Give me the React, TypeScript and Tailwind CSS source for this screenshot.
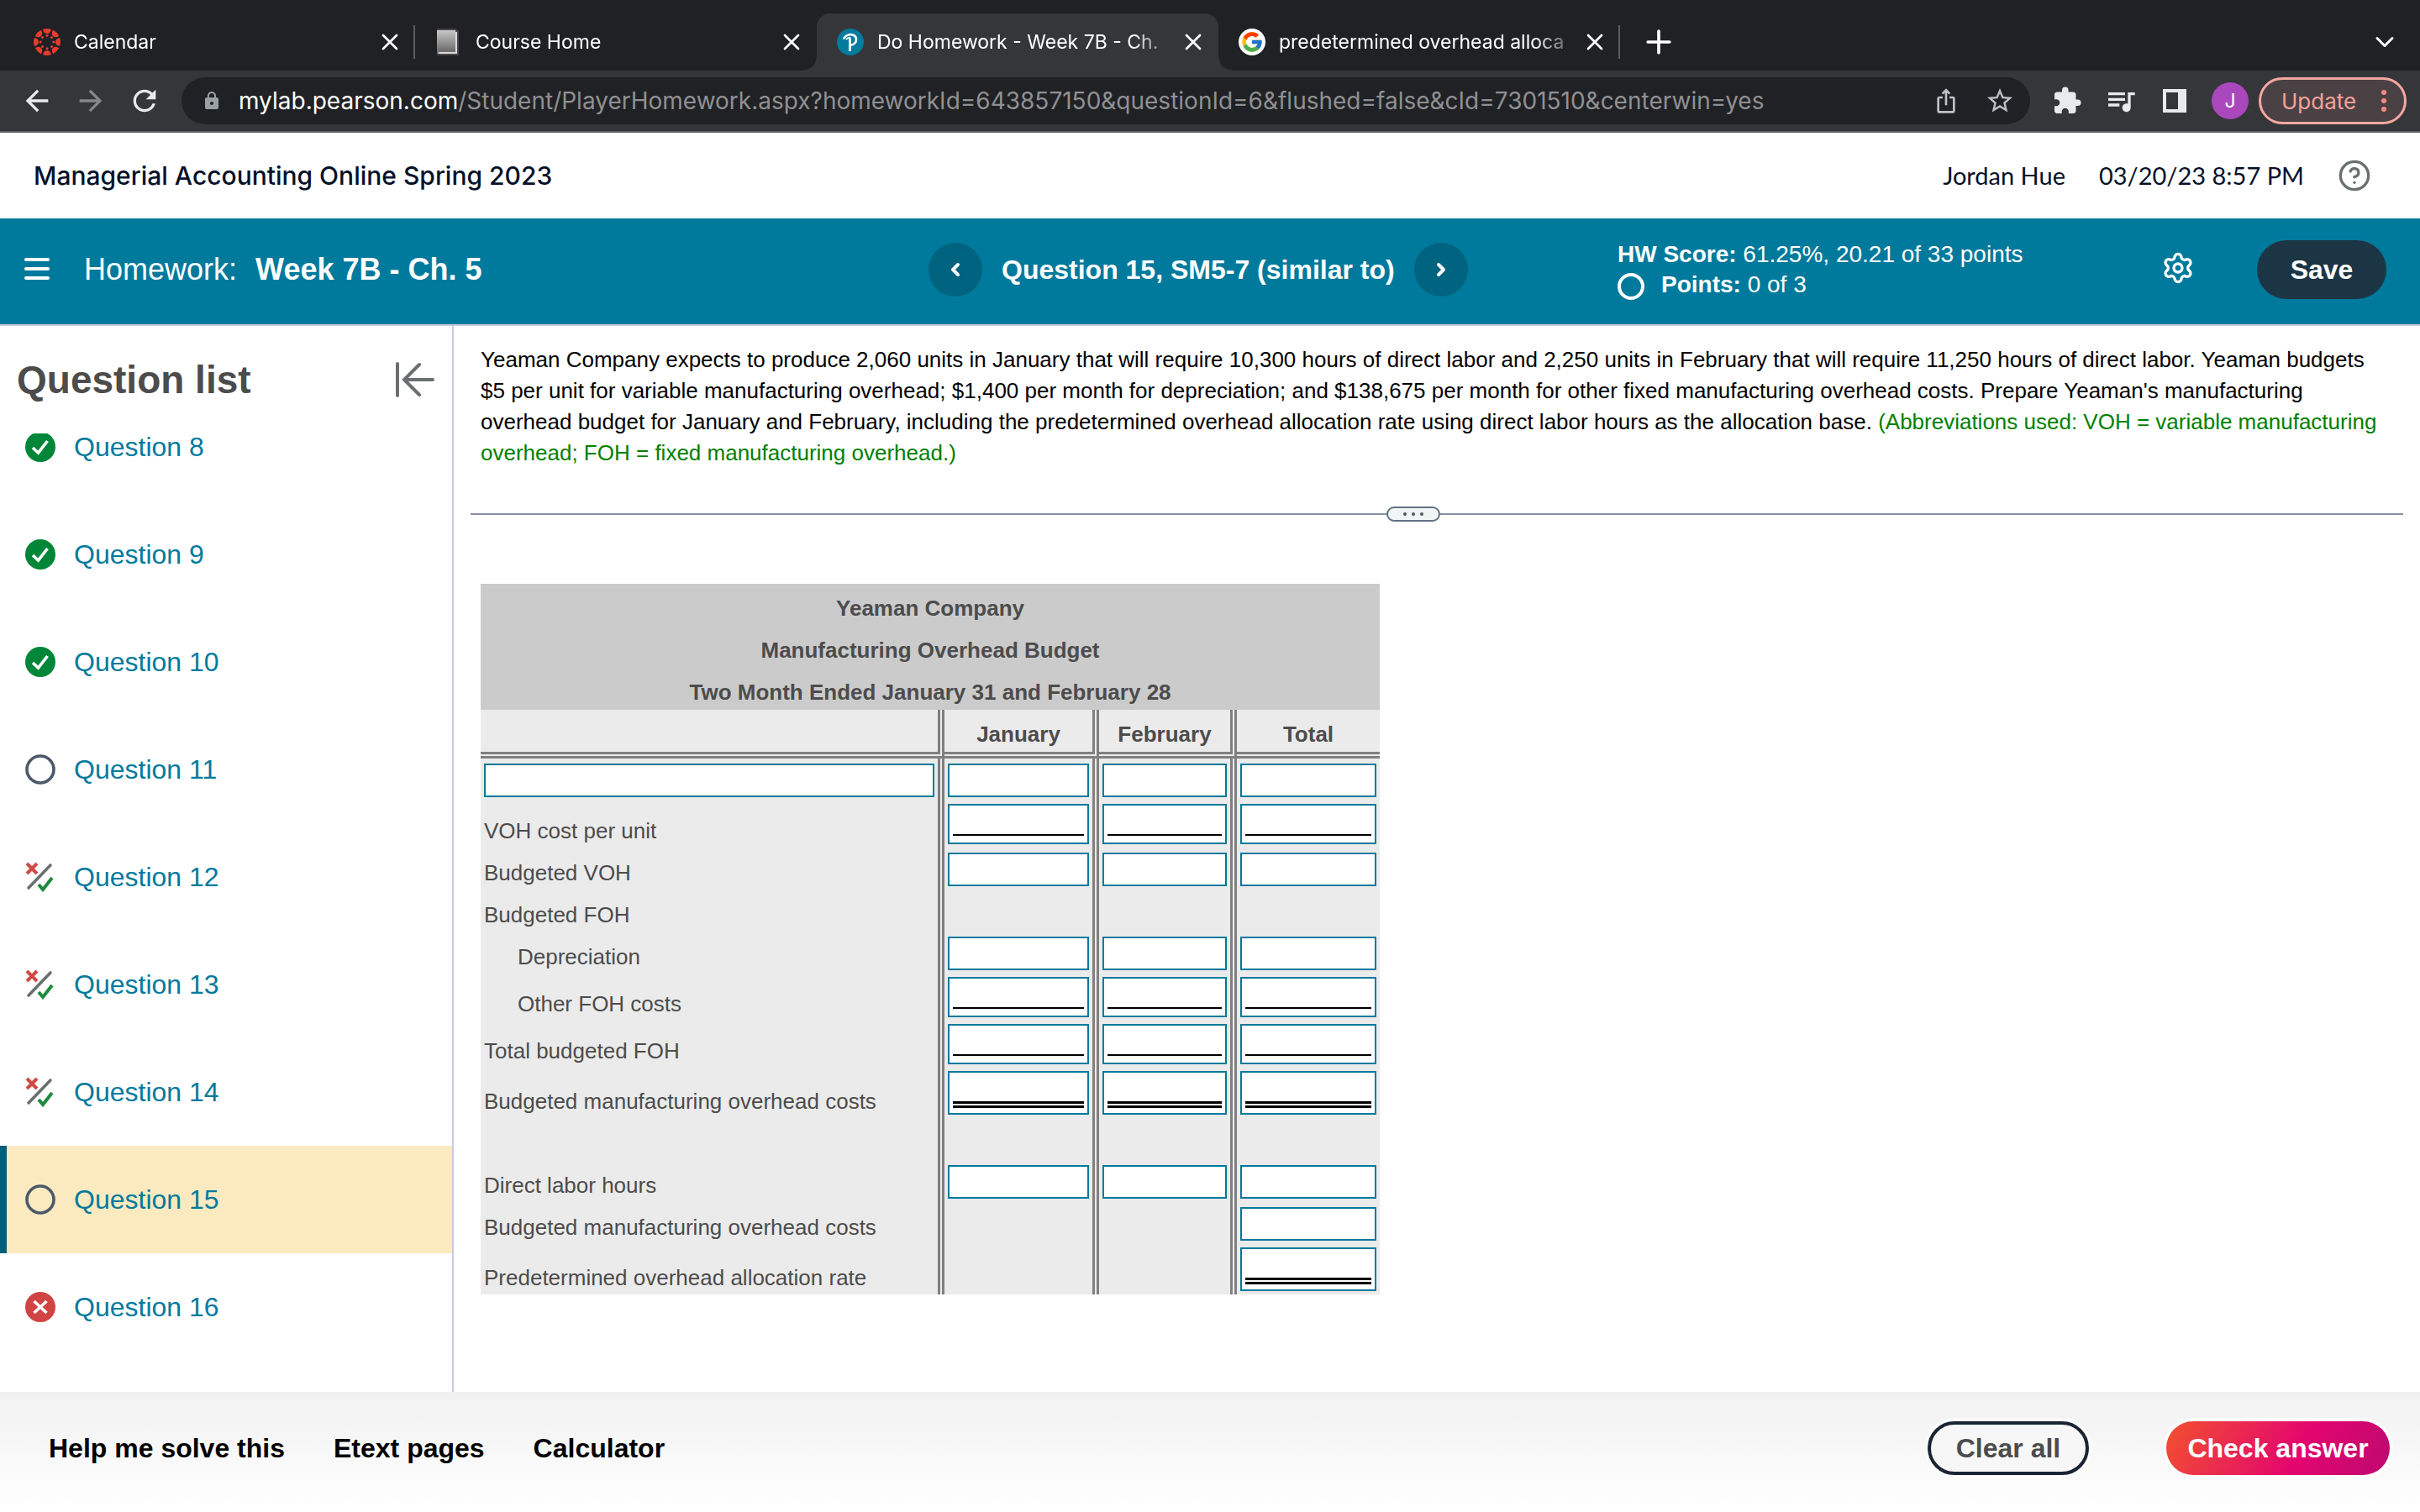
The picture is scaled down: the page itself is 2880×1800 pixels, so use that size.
import { ReactNode } from "react";
import { ChevronDown, ChevronLeft, ChevronRight, CircleQuestionMark, Plus, Settings, X } from "lucide-react";
import { FcGoogle } from "react-icons/fc";
import {
    MdArrowBack,
    MdArrowForward,
    MdExtension,
    MdIosShare,
    MdLock,
    MdQueueMusic,
    MdRefresh,
    MdStarOutline,
} from "react-icons/md";

type Status = "correct" | "open" | "partial" | "wrong";
type Field = "plain" | "single" | "double";

const questions: { number: number; status: Status }[] = [
    { number: 8, status: "correct" },
    { number: 9, status: "correct" },
    { number: 10, status: "correct" },
    { number: 11, status: "open" },
    { number: 12, status: "partial" },
    { number: 13, status: "partial" },
    { number: 14, status: "partial" },
    { number: 15, status: "open" },
    { number: 16, status: "wrong" },
];

const columns = ["January", "February", "Total"];

const rows: { label?: string; indent?: boolean; blank?: boolean; field?: Field; totalOnly?: boolean }[] = [
    { field: "plain" },
    { label: "VOH cost per unit", field: "single" },
    { label: "Budgeted VOH", field: "plain" },
    { label: "Budgeted FOH" },
    { label: "Depreciation", indent: true, field: "plain" },
    { label: "Other FOH costs", indent: true, field: "single" },
    { label: "Total budgeted FOH", field: "single" },
    { label: "Budgeted manufacturing overhead costs", field: "double" },
    { blank: true },
    { label: "Direct labor hours", field: "plain" },
    { label: "Budgeted manufacturing overhead costs", field: "plain", totalOnly: true },
    { label: "Predetermined overhead allocation rate", field: "double", totalOnly: true },
];

function CanvasLogo() {
    const angles = [0, 45, 90, 135, 180, 225, 270, 315];
    return (
        <svg className="size-8" viewBox="0 0 32 32" fill="#e63c2f">
            {angles.map((a) => (
                <g key={a} transform={`rotate(${a} 16 16)`}>
                    <path d="M11.2 0.8a16 16 0 0 1 9.6 0a4.8 5.200 0 0 1-9.6 0z" />
                    <circle cx="16" cy="8.200" r="1.5" />
                </g>
            ))}
        </svg>
    );
}

function BookLogo() {
    return (
        <svg className="size-8" viewBox="0 0 32 32">
            <defs>
                <linearGradient id="cover" x1="0" y1="0" x2="0" y2="1">
                    <stop offset="0" stopColor="#c9c9c9" />
                    <stop offset="1" stopColor="#6b6b6b" />
                </linearGradient>
            </defs>
            <path d="M2 0h22l4 3v29H2z" fill="#4a4449" />
            <path d="M2 2h22v28H2z" fill="url(#cover)" />
            <path d="M4 28h20v-24h2v26H4z" fill="#d8d8d8" />
            <path d="M3 2h20v25H3z" fill="url(#cover)" />
        </svg>
    );
}

function PearsonLogo() {
    return (
        <svg className="size-8" viewBox="0 0 32 32" fill="none" stroke="#fff">
            <circle cx="16" cy="16" r="16" fill="#047a9c" stroke="none" />
            <path d="M8 12.5c2-5 8-6.500 12-4.500c4 2 4 8 0 10.500c-2 1.200-4 1-5 .5" strokeWidth="2.600" />
            <path d="M15.500 12v15" strokeWidth="3" />
            <path d="M11 13c1.500-2 4-2.500 5.500-1.500" strokeWidth="1.800" />
        </svg>
    );
}

function GoogleLogo() {
    return (
        <span className="flex size-8 items-center justify-center rounded-full bg-white">
            <FcGoogle className="size-7" />
        </span>
    );
}

function StatusIcon({ status }: { status: Status }) {
    if (status === "open") {
        return (
            <svg className="size-9" viewBox="0 0 36 36">
                <circle cx="18" cy="18" r="16" fill="none" stroke="#4b5a6a" strokeWidth="3.600" />
            </svg>
        );
    }
    if (status === "partial") {
        return (
            <svg className="size-9" viewBox="0 0 36 36" fill="none">
                <path d="M2 2l12 12M14 2L2 14" stroke="#d04a45" strokeWidth="4" />
                <path d="M4 31L30 4" stroke="#6a7070" strokeWidth="3.600" strokeLinecap="round" />
                <path d="M16 27l5 6L32 19" stroke="#1f8a3f" strokeWidth="4" />
            </svg>
        );
    }
    const correct = status === "correct";
    return (
        <svg className="size-9" viewBox="0 0 36 36" fill="none" stroke="#fff" strokeWidth="3.600">
            <circle cx="18" cy="18" r="18" fill={correct ? "#008638" : "#d04444"} stroke="none" />
            <path d={correct ? "M9 19l6.500 6L26.500 11" : "M10.500 11l15 14M25.500 11l-15 14"} />
        </svg>
    );
}

function Tab({ icon, title, active, divider }: { icon: ReactNode; title: string; active?: boolean; divider?: boolean }) {
    return (
        <div className={`relative flex w-[478px] items-center gap-4 pr-3.5 pl-6 ${active ? "rounded-t-2xl bg-[#35363a]" : ""}`}>
            {active && (
                <>
                    <span className="absolute bottom-0 -left-4 size-4 bg-[radial-gradient(circle_at_top_left,#202124_15px,#35363a_16px)]" />
                    <span className="absolute -right-4 bottom-0 size-4 bg-[radial-gradient(circle_at_top_right,#202124_15px,#35363a_16px)]" />
                </>
            )}
            {icon}
            <span className="min-w-0 flex-1 overflow-hidden whitespace-nowrap [mask-image:linear-gradient(to_right,#000_88%,#0004)]">
                {title}
            </span>
            <button type="button" aria-label={`Close ${title}`}>
                <X className="size-8" />
            </button>
            {divider && <span className="absolute right-0 h-10 w-0.5 bg-[#5b5c60]" />}
        </div>
    );
}

function BrowserChrome() {
    return (
        <div className="font-[Inter,sans-serif] text-white">
            <div className="flex h-[84px] bg-[#202124] pt-4 pr-6 pl-4 text-[23px]">
                <Tab icon={<CanvasLogo />} title="Calendar" divider />
                <Tab icon={<BookLogo />} title="Course Home" />
                <Tab icon={<PearsonLogo />} title="Do Homework - Week 7B - Ch." active />
                <Tab icon={<GoogleLogo />} title="predetermined overhead alloca" divider />
                <button type="button" aria-label="New tab" className="ml-6">
                    <Plus className="size-11" strokeWidth={2} />
                </button>
                <button type="button" aria-label="Search tabs" className="ml-auto">
                    <ChevronDown className="size-9" />
                </button>
            </div>
            <div className="flex h-[74px] items-center gap-6 border-b-2 border-[#5f6063] bg-[#35363a] pr-4 pl-6 text-[#e8eaed]">
                <button type="button" aria-label="Back"><MdArrowBack className="size-10" /></button>
                <button type="button" aria-label="Forward"><MdArrowForward className="size-10 text-[#85868a]" /></button>
                <button type="button" aria-label="Reload"><MdRefresh className="size-10" /></button>
                <div className="flex h-14 min-w-0 flex-1 items-center gap-5 rounded-full bg-[#202124] pr-[18px] pl-6">
                    <MdLock className="size-6 shrink-0 text-[#9aa0a6]" />
                    <span className="flex-1 overflow-hidden text-[28px] whitespace-nowrap text-[#8f9093]">
                        <span className="text-white">mylab.pearson.com</span>
                        /Student/PlayerHomework.aspx?homeworkId=643857150&amp;questionId=6&amp;flushed=false&amp;cId=7301510&amp;centerwin=yes
                    </span>
                    <div className="flex gap-7 text-[#bdc1c6]">
                        <button type="button" aria-label="Share"><MdIosShare className="size-9 p-0.5" /></button>
                        <button type="button" aria-label="Bookmark"><MdStarOutline className="size-9" /></button>
                    </div>
                </div>
                <button type="button" aria-label="Extensions"><MdExtension className="size-10 p-0.5" /></button>
                <button type="button" aria-label="Media"><MdQueueMusic className="size-10" /></button>
                <button type="button" aria-label="Side panel">
                    <svg className="size-10" viewBox="0 0 40 40" fill="currentColor" fillRule="evenodd">
                        <path d="M6 6h28v28H6zM10 10v20h14V10z" />
                    </svg>
                </button>
                <div className="flex items-center gap-3">
                    <button type="button" className="size-11 rounded-full bg-[#ab47bc] text-[23px] text-white">J</button>
                    <button
                        type="button"
                        className="flex h-14 w-44 items-center justify-between rounded-full border-[3px] border-[#f6a8a0] bg-[#4a4145] pr-5 pl-6 text-[26px] text-[#f6a199]"
                    >
                        Update
                        <svg className="h-7 w-2" viewBox="0 0 8 28" fill="#f28b82">
                            <circle cx="4" cy="4" r="3" />
                            <circle cx="4" cy="14" r="3" />
                            <circle cx="4" cy="24" r="3" />
                        </svg>
                    </button>
                </div>
            </div>
        </div>
    );
}

function CourseHeader() {
    return (
        <header className="flex h-[102px] items-center bg-white pr-[58px] pl-10 font-[Lato,sans-serif] text-[29px] text-[#05112a]">
            <h1 className="font-[Inter,sans-serif] text-[30px] font-medium">Managerial Accounting Online Spring 2023</h1>
            <span className="ml-auto">Jordan Hue</span>
            <time className="ml-10">03/20/23 8:57 PM</time>
            <button type="button" aria-label="Help" className="ml-10 text-[#6a7070]">
                <CircleQuestionMark className="size-10" strokeWidth={2} />
            </button>
        </header>
    );
}

function AssignmentBar() {
    return (
        <div className="grid h-32 grid-cols-[1105fr_820fr_955fr] border-b-2 border-[#c7cbdf] bg-[#007a9c] pb-1 text-white">
            <div className="flex items-center pl-7">
                <button type="button" aria-label="Menu">
                    <svg className="h-8 w-8" viewBox="0 0 32 32" stroke="currentColor" strokeWidth="4" strokeLinecap="round">
                        <path d="M3 4h26M3 15h26M3 26h26" />
                    </svg>
                </button>
                <h2 className="ml-10 text-[36px]">
                    Homework: <b className="ml-3">Week 7B - Ch. 5</b>
                </h2>
            </div>
            <div className="flex items-center gap-[23px]">
                <button type="button" aria-label="Previous question" className="flex size-16 items-center justify-center rounded-full bg-[#00637f]">
                    <ChevronLeft className="size-6" strokeWidth={4} />
                </button>
                <h3 className="text-[32px] font-bold">Question 15, SM5-7 (similar to)</h3>
                <button type="button" aria-label="Next question" className="flex size-16 items-center justify-center rounded-full bg-[#00637f]">
                    <ChevronRight className="size-6" strokeWidth={4} />
                </button>
            </div>
            <div className="flex items-center pr-10">
                <div className="text-[28px] leading-9">
                    <p><b>HW Score:</b> 61.25%, 20.21 of 33 points</p>
                    <p className="flex items-center gap-5">
                        <span className="mt-1 size-8 rounded-full border-4 border-white" />
                        <span><b>Points:</b> 0 of 3</span>
                    </p>
                </div>
                <button type="button" aria-label="Settings" className="mb-1 ml-auto">
                    <Settings className="size-10" />
                </button>
                <button type="button" className="ml-[74px] h-[70px] w-[154px] rounded-full bg-[#1c3545] text-[32px] font-bold">Save</button>
            </div>
        </div>
    );
}

function QuestionList() {
    return (
        <nav className="w-[540px] shrink-0 border-r-2 border-[#c7cbdf]">
            <div className="flex h-32 items-center justify-between px-5">
                <h2 className="text-[46px] font-bold text-[#4c4c4c]">Question list</h2>
                <button type="button" aria-label="Collapse question list">
                    <svg className="size-12" viewBox="0 0 48 48" fill="none" stroke="#6a7070" strokeWidth="4" strokeLinecap="round">
                        <path d="M3 5v38M29 6L11 24l18 18M11 24h34" />
                    </svg>
                </button>
            </div>
            <ul className="overflow-hidden">
                {questions.map((q) => (
                    <li key={q.number} className="first:-mt-12">
                        <a
                            href="#"
                            className={`flex h-32 items-center gap-[22px] border-l-8 pl-[22px] text-[32px] text-[#007a9c] ${
                                q.number === 15 ? "border-[#005f7a] bg-[#fbeabf]" : "border-transparent"
                            }`}
                        >
                            <StatusIcon status={q.status} />
                            Question {q.number}
                        </a>
                    </li>
                ))}
            </ul>
        </nav>
    );
}

function AnswerField({ kind, label }: { kind: Field; label: string }) {
    if (kind === "plain") {
        return <input aria-label={label} className="mt-0.5 block h-10 w-full border-2 border-[#007a9c] bg-white px-1 outline-none" />;
    }
    return (
        <div className={`flex border-2 border-[#007a9c] bg-white px-1 ${kind === "single" ? "h-12 pb-2" : "h-[52px] pb-1.5"}`}>
            <input
                aria-label={label}
                className={`w-full border-black outline-none ${kind === "single" ? "border-b-2" : "border-b-8 border-double"}`}
            />
        </div>
    );
}

function BudgetTable() {
    return (
        <table className="mt-[74px] ml-3 w-[1070px] table-fixed border-separate border-spacing-0 bg-[#ebebeb] text-[26px] leading-8 text-[#4c4c4c]">
            <colgroup>
                <col className="w-[552px]" />
                <col className="w-[184px]" />
                <col className="w-[164px]" />
                <col className="w-[170px]" />
            </colgroup>
            <thead>
                <tr>
                    <th colSpan={4} className="bg-[#cbcbcb] p-0 leading-[42px]">
                        <p className="pt-2">Yeaman Company</p>
                        <p className="pt-2">Manufacturing Overhead Budget</p>
                        <p className="pt-2">Two Month Ended January 31 and February 28</p>
                    </th>
                </tr>
                <tr>
                    <td className="h-[58px] border-r-8 border-b-8 border-double border-[#808080]" />
                    {columns.map((c) => (
                        <th key={c} className="h-[58px] border-r-8 border-b-8 border-double border-[#808080] pt-2 pb-0 last:border-r-0">
                            {c}
                        </th>
                    ))}
                </tr>
            </thead>
            <tbody>
                {rows.map((row, i) => (
                    <tr key={i}>
                        <th
                            scope="row"
                            className={`h-[50px] border-r-8 border-double border-[#808080] p-1 text-left align-bottom font-normal ${row.indent ? "pl-11" : ""}`}
                        >
                            {row.label ?? (!row.blank && <AnswerField kind="plain" label="Line item" />)}
                        </th>
                        {columns.map((c) => (
                            <td key={c} className="border-r-8 border-double border-[#808080] p-1 last:border-r-0">
                                {row.field && (!row.totalOnly || c === "Total") && (
                                    <AnswerField kind={row.field} label={`${row.label ?? "Line item"}, ${c}`} />
                                )}
                            </td>
                        ))}
                    </tr>
                ))}
            </tbody>
        </table>
    );
}

function Problem() {
    return (
        <main className="min-w-0 flex-1 px-5">
            <p className="pt-[22px] pr-4 pl-3 text-[26px] leading-[37px] text-black">
                Yeaman Company expects to produce 2,060 units in January that will require 10,300 hours of direct labor and
                2,250 units in February that will require 11,250 hours of direct labor. Yeaman budgets $5 per unit for
                variable manufacturing overhead; $1,400 per month for depreciation; and $138,675 per month for other fixed
                manufacturing overhead costs. Prepare Yeaman's manufacturing overhead budget for January and February,
                including the predetermined overhead allocation rate using direct labor hours as the allocation base.{" "}
                <span className="text-[#008000]">
                    (Abbreviations used: VOH = variable manufacturing overhead; FOH = fixed manufacturing overhead.)
                </span>
            </p>
            <div className="mt-[45px] flex items-center">
                <hr className="flex-[1090] border-t-2 border-[#8593a6]" />
                <button
                    type="button"
                    aria-label="Resize panels"
                    className="flex h-[18px] w-16 items-center justify-center gap-1.5 rounded-full border-2 border-[#637082] bg-[#f1f5f6]"
                >
                    <span className="size-1 rounded-full bg-[#4c5560]" />
                    <span className="size-1 rounded-full bg-[#4c5560]" />
                    <span className="size-1 rounded-full bg-[#4c5560]" />
                </button>
                <hr className="flex-[1145] border-t-2 border-[#8593a6]" />
            </div>
            <BudgetTable />
        </main>
    );
}

function ActionBar() {
    return (
        <footer className="flex h-[143px] items-start bg-linear-to-b from-[#f1f1f1] to-white pt-[35px] pr-9 pl-[58px] text-[32px] font-bold text-black">
            <div className="flex h-16 items-center gap-[58px]">
                <button type="button">Help me solve this</button>
                <button type="button">Etext pages</button>
                <button type="button">Calculator</button>
            </div>
            <button type="button" className="ml-auto h-16 w-48 rounded-full border-4 border-[#1b2433] bg-[#f7f7f7] text-[#4c4c4c] ring-4 ring-white/60">
                Clear all
            </button>
            <button
                type="button"
                className="ml-[92px] h-16 w-[266px] rounded-full bg-[linear-gradient(115deg,#f2502f_0%,#e3056f_60%,#bd0970_100%)] text-white ring-4 ring-white/60"
            >
                Check answer
            </button>
        </footer>
    );
}

export default function App() {
    return (
        <div className="flex min-h-screen flex-col bg-white font-['Liberation_Sans',Arial,sans-serif]">
            <BrowserChrome />
            <CourseHeader />
            <AssignmentBar />
            <div className="flex flex-1">
                <QuestionList />
                <Problem />
            </div>
            <ActionBar />
        </div>
    );
}
